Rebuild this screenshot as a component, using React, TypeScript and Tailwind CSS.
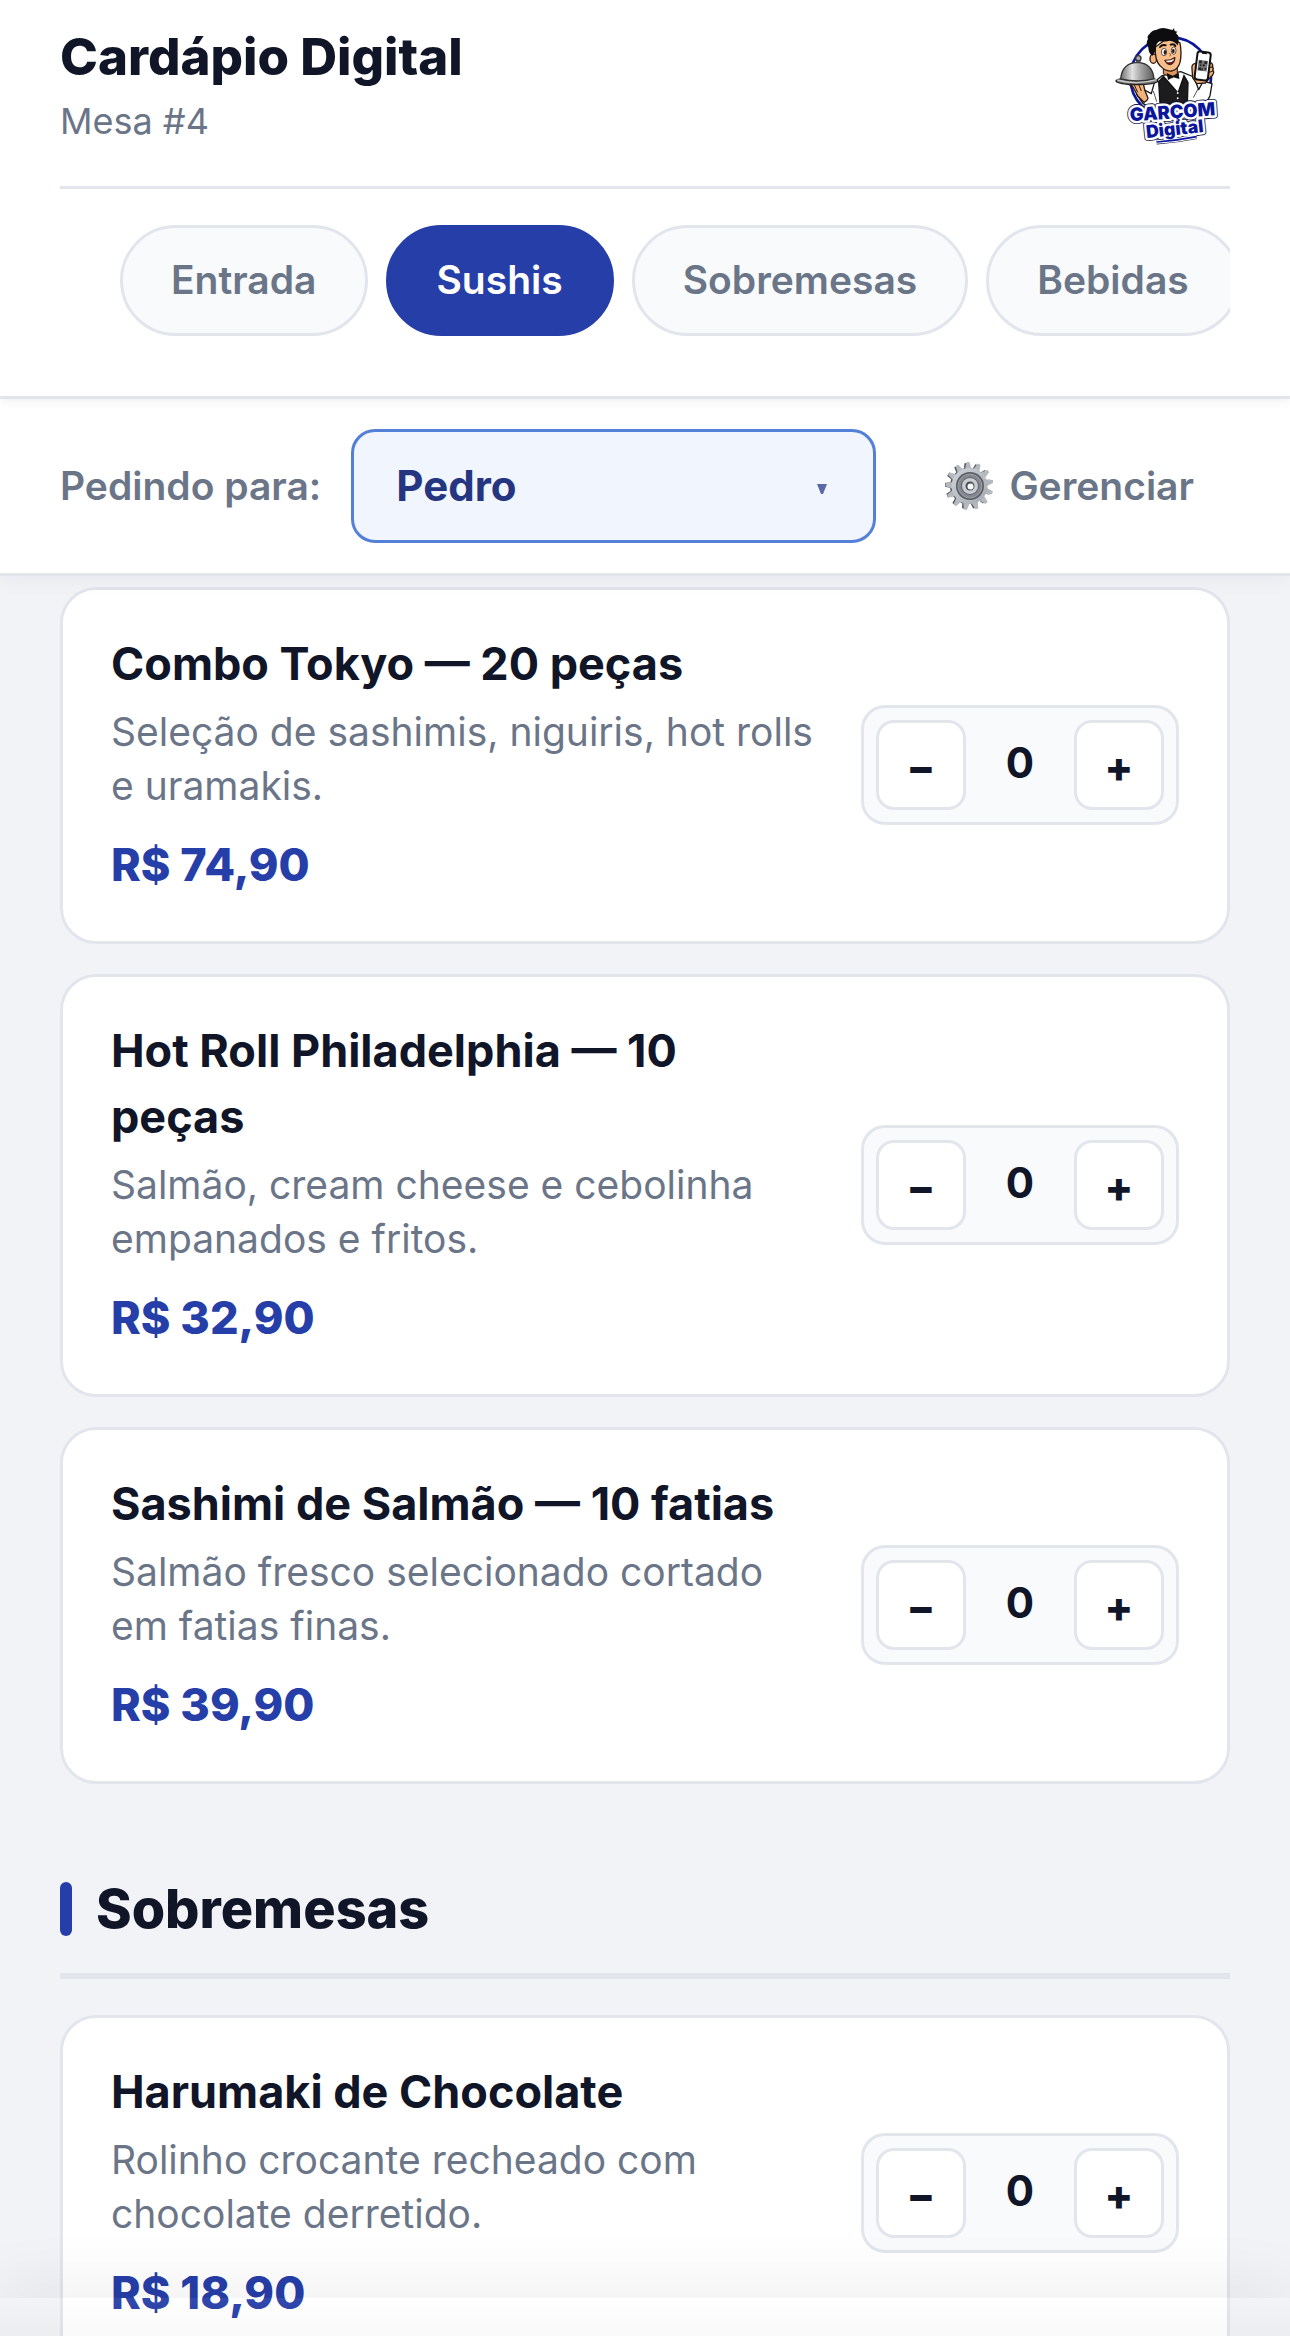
import { useState } from 'react';

interface MenuItem {
  id: string;
  name: string;
  description: string;
  price: string;
}

const categories = ['Entrada', 'Sushis', 'Sobremesas', 'Bebidas'];

const people = ['Pedro', 'Ana', 'Lucas'];

const sushis: MenuItem[] = [
  {
    id: 'combo-tokyo',
    name: 'Combo Tokyo — 20 peças',
    description: 'Seleção de sashimis, niguiris, hot rolls e uramakis.',
    price: 'R$ 74,90',
  },
  {
    id: 'hot-roll',
    name: 'Hot Roll Philadelphia — 10 peças',
    description: 'Salmão, cream cheese e cebolinha empanados e fritos.',
    price: 'R$ 32,90',
  },
  {
    id: 'sashimi',
    name: 'Sashimi de Salmão — 10 fatias',
    description: 'Salmão fresco selecionado cortado em fatias finas.',
    price: 'R$ 39,90',
  },
];

const desserts: MenuItem[] = [
  {
    id: 'harumaki',
    name: 'Harumaki de Chocolate',
    description: 'Rolinho crocante recheado com chocolate derretido.',
    price: 'R$ 18,90',
  },
];

function Logo() {
  return (
    <svg
      className="w-[120px] h-[120px] shrink-0"
      viewBox="30 36 360 360"
      role="img"
      aria-label="Garçom Digital"
    >
      <defs>
        <linearGradient id="cloche" x1="0" x2="1">
          <stop offset="0" stopColor="#6f6f6f" />
          <stop offset="0.35" stopColor="#e2e2e2" />
          <stop offset="0.6" stopColor="#a5a5a5" />
          <stop offset="1" stopColor="#5a5a5a" />
        </linearGradient>
      </defs>
      {/* Ring */}
      <circle cx="212" cy="188" r="121" fill="#fff" stroke="#0b169c" strokeWidth="8" />
      {/* Shirt and sleeves */}
      <path
        d="M186 182l-22 18-10 36-26-14-18 16 18 26q18 18 42 6l12 12h92l14-18q30 8 42-22l6-36-26-8-14 26-14-38-40-16z"
        fill="#fff"
        stroke="#1a1a1a"
        strokeWidth="4"
        strokeLinejoin="round"
      />
      <path d="M160 228l10 32M294 222l-14 26" stroke="#555" strokeWidth="3" fill="none" />
      {/* Vest */}
      <path d="M190 184l-14 16 4 66h82l2-64-12-20-18 52z" fill="#1c1c1f" stroke="#111" strokeWidth="4" />
      <path d="M200 182l32 44 14-42-18 4z" fill="#fff" />
      <circle cx="233" cy="234" r="3" fill="#eee" />
      <circle cx="233" cy="250" r="3" fill="#eee" />
      {/* Neck, ear and face */}
      <path d="M190 150v26l24 12 18-8v-26z" fill="#e0975f" stroke="#2b1a12" strokeWidth="3" />
      <ellipse cx="160" cy="131" rx="10" ry="14" fill="#f2b27c" stroke="#2b1a12" strokeWidth="4" />
      <path
        d="M166 96q-2 40 14 56 16 18 34 16 20-4 26-26 6-26 0-58l-30-20z"
        fill="#f8bd88"
        stroke="#2b1a12"
        strokeWidth="4"
      />
      {/* Hair */}
      <path
        d="M158 122q-10-4-12-16 0-10-4-14-4-12 2-20-4-8 4-14 6-12 22-14 14-8 32-3 10 2 16 4l4-6 2 9 8 2-4 5q10 8 8 18 0 12-3 18-8-12-24-14-16 4-30 2-12 6-11 22-2 10-10 21z"
        fill="#0d0d10"
      />
      {/* Eyes, brows, nose and mouth */}
      <ellipse cx="192" cy="111" rx="8" ry="11" fill="#fff" stroke="#111" strokeWidth="2" />
      <ellipse cx="221" cy="107" rx="7" ry="11" fill="#fff" stroke="#111" strokeWidth="2" />
      <ellipse cx="195" cy="112" rx="4" ry="7" fill="#2d1a10" />
      <ellipse cx="220" cy="108" rx="4" ry="7" fill="#2d1a10" />
      <path d="M180 96q6-8 17-5M212 89q10-4 14 4" fill="none" stroke="#111" strokeWidth="6" strokeLinecap="round" />
      <path d="M208 114q8 6 1 10" fill="none" stroke="#a55b30" strokeWidth="3" />
      <path d="M194 136q18 2 31-9-1 20-14 22-11 1-17-13z" fill="#6c1717" stroke="#2b1a12" strokeWidth="3" />
      <path d="M198 137q14 1 24-6l-2 6q-8 6-20 4z" fill="#fff" />
      {/* Bow tie */}
      <path d="M200 174l18 8 18-9 2 19-18-5-16 8z" fill="#111" />
      {/* Serving hand */}
      <path
        d="M78 206l18 6 6 10 12 22 18 18q10-4 12-12l-10-26-4-18-28-4z"
        fill="#f2b27c"
        stroke="#2b1a12"
        strokeWidth="4"
        strokeLinejoin="round"
      />
      <path d="M103 210l10 22M116 208l8 20" stroke="#2b1a12" strokeWidth="3" />
      {/* Cloche */}
      <ellipse cx="111" cy="198" rx="63" ry="11" fill="#777" stroke="#222" strokeWidth="4" />
      <path d="M62 192q4-48 50-50 46 2 50 50-50 12-100 0z" fill="url(#cloche)" stroke="#333" strokeWidth="4" />
      <circle cx="115" cy="130" r="8" fill="#aaa" stroke="#333" strokeWidth="4" />
      <path d="M108 141h14" stroke="#444" strokeWidth="5" />
      <path d="M52 195q58 16 118-1" fill="none" stroke="#ccc" strokeWidth="4" />
      {/* Hand with phone */}
      <path
        d="M284 146q-10 2-8 16l2 26 12 18 26-2 14-16 8-8q6-10 0-14 4-6-1-10 3-8-3-12l-12-2z"
        fill="#f2b27c"
        stroke="#2b1a12"
        strokeWidth="4"
      />
      <path d="M328 158l12-3M326 172l12-3" stroke="#2b1a12" strokeWidth="3" />
      <rect x="288" y="111" width="40" height="84" rx="8" fill="#fff" stroke="#111" strokeWidth="6" transform="rotate(7 308 153)" />
      <g transform="rotate(7 308 153)">
        <path d="M301 114h15" stroke="#111" strokeWidth="5" />
        <rect x="294" y="136" width="28" height="32" fill="#777" />
        <path
          d="M296 138h8v8h-8zM312 138h8v8h-8zM296 158h8v8h-8zM308 148h6v6h-6zM314 158h6v5h-6zM305 160h5v6h-5zM299 149h5v5h-5z"
          fill="#222"
        />
      </g>
      {/* Lettering */}
      <g
        fontFamily="Inter, 'Liberation Sans', sans-serif"
        fontWeight="900"
        fill="#0b169c"
        strokeLinejoin="round"
      >
        <g stroke="#10143c" strokeWidth="19">
          <text x="91" y="319" fontSize="55" transform="rotate(-4 91 319)" aria-hidden="true">GARÇOM</text>
          <text x="140" y="369" fontSize="53" transform="rotate(-6 140 369)" aria-hidden="true">Digital</text>
          <path d="M170 381q60-4 120-16" strokeWidth="15" fill="none" />
        </g>
        <g stroke="#fff" strokeWidth="14">
          <text x="91" y="319" fontSize="55" transform="rotate(-4 91 319)" aria-hidden="true">GARÇOM</text>
          <text x="140" y="369" fontSize="53" transform="rotate(-6 140 369)" aria-hidden="true">Digital</text>
          <path d="M170 381q60-4 120-16" strokeWidth="11" fill="none" />
        </g>
        <text x="91" y="319" fontSize="55" transform="rotate(-4 91 319)">GARÇOM</text>
        <text x="140" y="369" fontSize="53" transform="rotate(-6 140 369)">Digital</text>
        <path d="M170 381q60-4 120-16" stroke="#0b169c" strokeWidth="5" fill="none" />
      </g>
    </svg>
  );
}

const teeth = [0, 1, 2, 3, 4, 5, 6, 7, 8, 9, 10, 11, 12];

function GearIcon() {
  return (
    <svg className="w-[51px] h-12 shrink-0" viewBox="-3 0 51 48" aria-hidden="true">
      <defs>
        <linearGradient id="gear" x1="0" y1="0" x2="1" y2="1">
          <stop offset="0" stopColor="#cfd3d9" />
          <stop offset="1" stopColor="#a4a8b0" />
        </linearGradient>
      </defs>
      {/* Darker copy behind gives the gear its edge */}
      <g fill="#55585e">
        {teeth.map((i) => (
          <path key={i} d="M20 8l1-7h4l1 7z" transform={`rotate(${i * 27.7 - 4} 23 24)`} />
        ))}
        <circle cx="23" cy="24" r="18" />
      </g>
      <g fill="#b4b8bf">
        {teeth.map((i) => (
          <path key={i} d="M21 8l2-8h3l2 8z" transform={`rotate(${i * 27.7 - 4} 24.5 24)`} />
        ))}
      </g>
      <circle cx="24.5" cy="24" r="18" fill="url(#gear)" />
      <circle cx="25" cy="24" r="14" fill="#5b5e64" />
      <circle cx="25" cy="24" r="12" fill="#85888e" stroke="#9c9fa5" />
      <circle cx="25" cy="24" r="9" fill="#5f6268" />
      <circle cx="25" cy="24" r="8" fill="#c9ccd2" />
      <circle cx="25" cy="24" r="4.5" fill="#4c4f55" />
      <circle cx="25.5" cy="24.5" r="3" fill="#fff" />
    </svg>
  );
}

function Stepper({ name }: { name: string }) {
  const [count, setCount] = useState(0);

  return (
    <div className="flex items-center shrink-0 bg-[#f8fafc] border-3 border-[#e2e6ec] rounded-3xl p-3">
      <button
        type="button"
        aria-label={`Remover ${name}`}
        onClick={() => setCount(Math.max(0, count - 1))}
        className="w-[90px] h-[90px] bg-white border-3 border-[#e2e6ec] rounded-[18px] text-[42px] leading-[60px] font-extrabold pt-1"
      >
        −
      </button>
      <span className="w-[108px] pb-1 text-center text-[42px] leading-[60px] font-bold">
        {count}
      </span>
      <button
        type="button"
        aria-label={`Adicionar ${name}`}
        onClick={() => setCount(count + 1)}
        className="w-[90px] h-[90px] bg-white border-3 border-[#e2e6ec] rounded-[18px] text-[42px] leading-[60px] font-extrabold pt-1"
      >
        +
      </button>
    </div>
  );
}

function ItemCard({ item }: { item: MenuItem }) {
  return (
    <article className="flex items-center gap-[45px] bg-white border-3 border-[#e2e6ec] rounded-[36px] px-12 pt-[41px] pb-[43px]">
      <div className="flex-1 min-w-0">
        <h3 className="text-[45px] leading-[66px] font-bold">{item.name}</h3>
        <p className="mt-2 text-[39px] leading-[54px] text-[#6b7588]">{item.description}</p>
        <p className="mt-[19px] text-[45px] leading-[66px] font-extrabold text-[#263ea8]">{item.price}</p>
      </div>
      <Stepper name={item.name} />
    </article>
  );
}

export default function App() {
  const [active, setActive] = useState('Sushis');
  const [person, setPerson] = useState('Pedro');

  return (
    <div className="relative h-screen flex flex-col overflow-hidden bg-[#f1f3f7] text-[#111528] font-[Inter,'Liberation_Sans',sans-serif]">
      {/* Header */}
      <header className="relative z-20 shrink-0 bg-white px-[60px] border-b-3 border-[#e2e6ec] shadow-[0_3px_9px_rgba(15,23,42,0.05)]">
        <div className="flex items-center justify-between pt-6 pb-9 border-b-3 border-[#e2e6ec]">
          <div>
            <h1 className="text-[51px] leading-[66px] font-extrabold">Cardápio Digital</h1>
            <p className="mt-[3px] text-[36px] leading-[57px] text-[#6b7588]">Mesa #4</p>
          </div>
          <Logo />
        </div>
        <nav className="flex gap-[18px] pl-[60px] pt-9 pb-[60px] overflow-hidden">
          {categories.map((category) => (
            <button
              key={category}
              type="button"
              onClick={() => setActive(category)}
              className={
                category === active
                  ? 'shrink-0 h-[111px] px-12 pb-0.5 rounded-full border-3 border-[#263ea8] bg-[#263ea8] text-white text-[39px] leading-[60px] font-semibold'
                  : 'shrink-0 h-[111px] px-12 pb-0.5 rounded-full border-3 border-[#e2e6ec] bg-[#f8fafc] text-[#6b7588] text-[39px] leading-[60px] font-semibold'
              }
            >
              {category}
            </button>
          ))}
        </nav>
      </header>

      {/* Who is ordering */}
      <div className="relative z-10 shrink-0 flex items-center gap-[30px] bg-white px-[60px] py-[30px] border-b-3 border-[#e2e6ec] shadow-[0_6px_18px_rgba(15,23,42,0.04)]">
        <label htmlFor="person" className="text-[39px] leading-[60px] font-semibold text-[#6b7588]">
          Pedindo para:
        </label>
        <div className="relative flex-1">
          <select
            id="person"
            value={person}
            onChange={(e) => setPerson(e.target.value)}
            className="block w-full h-[114px] appearance-none rounded-3xl border-3 border-[#5580d8] bg-[#f0f5fe] px-[42px] text-[42px] leading-[60px] font-bold text-[#26357f]"
          >
            {people.map((name) => (
              <option key={name}>{name}</option>
            ))}
          </select>
          <svg
            className="absolute right-12 top-[54px] w-[12px] h-[12px] pointer-events-none"
            viewBox="0 0 12 12"
            aria-hidden="true"
          >
            <path d="M1 1h10L7 11H5z" fill="#5a69a5" />
          </svg>
        </div>
        <button
          type="button"
          className="flex items-center gap-4 px-9 text-[39px] leading-[60px] font-semibold text-[#6b7588]"
        >
          <GearIcon />
          Gerenciar
        </button>
      </div>

      {/* Menu */}
      <main className="flex-1 min-h-0 overflow-y-auto [scrollbar-width:none] px-[60px] pt-[11px] pb-[60px]">
        <section className="flex flex-col gap-[30px]">
          {sushis.map((item) => (
            <ItemCard key={item.id} item={item} />
          ))}
        </section>

        <section className="mt-[88px]">
          <div className="flex items-center gap-6 pb-[27px] mb-9 border-b-6 border-[#e2e6ec]">
            <span className="w-3 h-[54px] rounded-full bg-[#263ea8]" />
            <h2 className="text-[54px] leading-[74px] font-extrabold">Sobremesas</h2>
          </div>
          <div className="flex flex-col gap-[30px]">
            {desserts.map((item) => (
              <ItemCard key={item.id} item={item} />
            ))}
          </div>
        </section>
      </main>

      {/* Bottom bar edge */}
      <div className="absolute inset-x-0 bottom-0 h-[38px] bg-linear-to-b from-white/5 to-black/2 shadow-[0_-12px_60px_rgba(0,0,0,0.08)] pointer-events-none" />
    </div>
  );
}
